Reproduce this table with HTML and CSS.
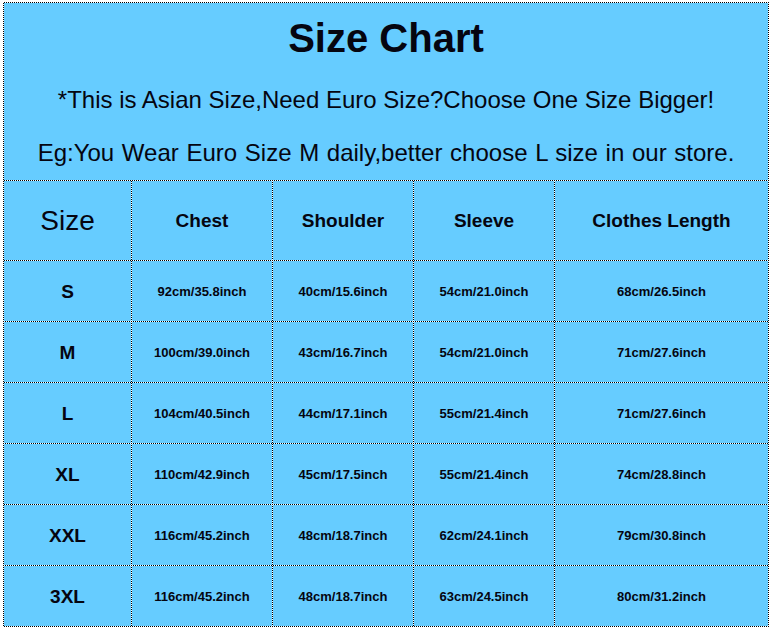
FILE: index.html
```html
<!DOCTYPE html>
<html>
<head>
<meta charset="utf-8">
<link rel="stylesheet" href="styles.css">
</head>
<body>
<div class="chart">
  <div class="intro">
    <h1 class="title">Size Chart</h1>
    <p class="note">*This is Asian Size,Need Euro Size?Choose One Size Bigger!</p>
    <p class="note note-wide">Eg:You Wear Euro Size M daily,better choose L size in our store.</p>
  </div>
  <div class="cell head size-head">Size</div>
  <div class="cell head">Chest</div>
  <div class="cell head">Shoulder</div>
  <div class="cell head">Sleeve</div>
  <div class="cell head">Clothes Length</div>

  <div class="cell label">S</div>
  <div class="cell val">92cm/35.8inch</div>
  <div class="cell val">40cm/15.6inch</div>
  <div class="cell val">54cm/21.0inch</div>
  <div class="cell val">68cm/26.5inch</div>

  <div class="cell label">M</div>
  <div class="cell val">100cm/39.0inch</div>
  <div class="cell val">43cm/16.7inch</div>
  <div class="cell val">54cm/21.0inch</div>
  <div class="cell val">71cm/27.6inch</div>

  <div class="cell label">L</div>
  <div class="cell val">104cm/40.5inch</div>
  <div class="cell val">44cm/17.1inch</div>
  <div class="cell val">55cm/21.4inch</div>
  <div class="cell val">71cm/27.6inch</div>

  <div class="cell label">XL</div>
  <div class="cell val">110cm/42.9inch</div>
  <div class="cell val">45cm/17.5inch</div>
  <div class="cell val">55cm/21.4inch</div>
  <div class="cell val">74cm/28.8inch</div>

  <div class="cell label">XXL</div>
  <div class="cell val">116cm/45.2inch</div>
  <div class="cell val">48cm/18.7inch</div>
  <div class="cell val">62cm/24.1inch</div>
  <div class="cell val">79cm/30.8inch</div>

  <div class="cell label">3XL</div>
  <div class="cell val">116cm/45.2inch</div>
  <div class="cell val">48cm/18.7inch</div>
  <div class="cell val">63cm/24.5inch</div>
  <div class="cell val">80cm/31.2inch</div>
</div>
</body>
</html>
```
FILE: styles.css
```css
html, body {
  margin: 0;
  padding: 0;
  background: #fff;
}
body {
  font-family: "Liberation Sans", Arial, sans-serif;
  color: #050510;
}
.chart {
  margin: 2px 0 0 3px;
  width: 766px;
  box-sizing: border-box;
  padding: 1px;
  display: grid;
  grid-template-columns: 127px 140px 140px 140px 213px;
  grid-template-rows: 177px 79px repeat(6, 60px);
  gap: 1px;
  background: repeating-conic-gradient(#000 0 25%, #fff 0 50%) 0 0 / 2px 2px;
}
.intro {
  grid-column: 1 / -1;
  background: #66ccff;
  display: flex;
  flex-direction: column;
  align-items: center;
  padding-top: 12px;
}
.title {
  margin: 0;
  font-size: 40px;
  line-height: 46px;
  font-weight: bold;
}
.note {
  margin: 25px 0 0;
  font-size: 24px;
  line-height: 28px;
}
.note-wide {
  word-spacing: 1px;
}
.cell {
  background: #66ccff;
  display: flex;
  align-items: center;
  justify-content: center;
  font-weight: bold;
}
.head {
  font-size: 19px;
}
.size-head {
  font-weight: normal;
  font-size: 28px;
}
.label {
  font-size: 19px;
  padding-top: 1px;
}
.val {
  font-size: 13px;
}
```
